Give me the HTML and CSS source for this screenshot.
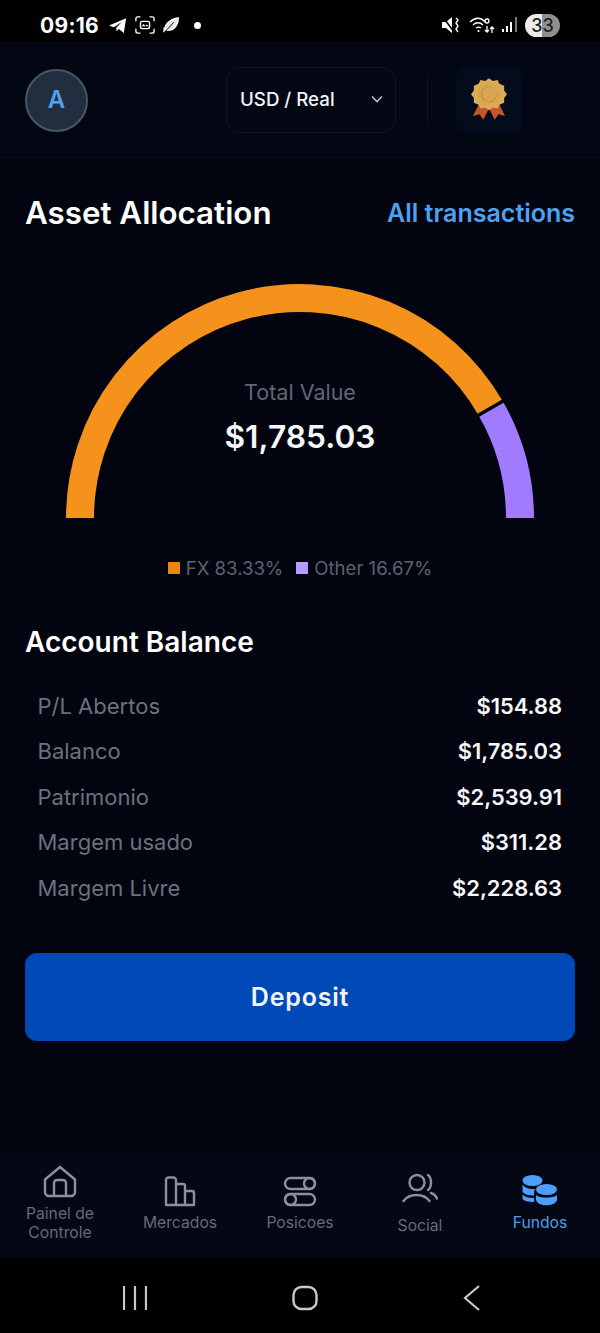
FILE: index.html
```html
<!DOCTYPE html>
<html lang="en">
<head>
<meta charset="utf-8">
<title>Asset Allocation</title>
<link rel="stylesheet" href="styles.css">
</head>
<body>
<div class="phone">
  <div class="status">
    <span class="time">09:16</span>
    <svg class="st-ic" width="20" height="18" viewBox="0 0 22 20"><path d="M1 10.500 20 2.500 17.500 19 12 14.500 9.500 17 9 13 15.500 6.500 6.500 12.500Z" fill="#fff"/></svg>
    <svg class="st-ic" width="20" height="20" viewBox="0 0 22 20" fill="none" stroke="#fff" stroke-width="1.500"><path d="M1 6V3a2 2 0 0 1 2-2h3M16 1h3a2 2 0 0 1 2 2v3M21 14v3a2 2 0 0 1-2 2h-3M6 19H3a2 2 0 0 1-2-2v-3"/><rect x="6" y="6" width="10" height="8" rx="2"/><path d="M7 11.500l2.500-2.500 2 2 1.500-1.500 2 2Z" fill="#fff" stroke="none"/></svg>
    <svg class="st-ic" width="18" height="18" viewBox="0 0 20 20" fill="none" stroke="#fff" stroke-width="1.500"><path d="M2 18C3 9 9 3 18 2c0 8-4 14-12 14-2 0-3.500-1-4-3" fill="#fff" fill-opacity=".9"/><path d="M4 17 13 7" stroke="#000" stroke-width="1"/></svg>
    <span class="dot"></span>
    <span class="st-spacer"></span>
    <svg class="st-ic" width="18" height="18" viewBox="0 0 18 18"><path d="M0 6h4l6-5v16l-6-5H0Z" fill="#fff"/><path d="M1 1l11 15" stroke="#000" stroke-width="1.500"/><path d="M14 2l2 2-2 3 2 3-2 3 2 3" stroke="#fff" fill="none" stroke-width="1.400"/></svg>
    <svg class="st-ic wifi" width="26" height="18" viewBox="0 0 26 18" fill="none" stroke="#fff" stroke-width="1.300"><path d="M1 6c5-5 11-5 15 0M4 9c3-3 7-3 10 0M7 12c2-1.500 3-1.500 5 0"/><circle cx="9.500" cy="15" r="1.100" fill="#fff" stroke="none"/><circle cx="18" cy="5" r="2"/><path d="M18 10v6M16 14l2 2 2-2M23 17v-6M21 13l2-2 2 2"/></svg>
    <svg class="st-ic" width="16" height="18" viewBox="0 0 16 18" fill="#fff"><rect x="0" y="13" width="2" height="3"/><rect x="4" y="10" width="2" height="6"/><rect x="8" y="6" width="2" height="10"/><rect x="13" y="1" width="2" height="15" fill="#777"/></svg>
    <span class="battery">33</span>
  </div>

  <header class="top">
    <div class="avatar">A</div>
    <div class="top-right">
      <div class="select">
        <span>USD / Real</span>
        <svg width="12" height="8" viewBox="0 0 12 8" fill="none" stroke="#b8bec9" stroke-width="1.600"><path d="M1 1.500 6 6.500 11 1.500"/></svg>
      </div>
      <span class="vsep"></span>
      <div class="medal">
        <svg width="36" height="44" viewBox="0 0 38 46">
          <path d="M9 27 2 41l7-2 4 6 7-14Z" fill="#c4552a"/>
          <path d="M29 27l7 14-7-2-4 6-7-14Z" fill="#c4552a"/>
          <path d="M19 1l4 3 5-1 2 4 5 2 0 5 3 4-3 4 0 5-5 2-2 4-5-1-4 3-4-3-5 1-2-4-5-2 0-5-3-4 3-4 0-5 5-2 2-4 5 1Z" fill="#dcab55"/>
          <circle cx="19" cy="18" r="12" fill="#d8a650"/>
          <path d="M27 18a8 8 0 1 1-5-7.500" fill="none" stroke="#c4953f" stroke-width="1.300"/>
        </svg>
      </div>
    </div>
  </header>

  <main class="main">
    <div class="heading">
      <h1>Asset Allocation</h1>
      <a class="all">All transactions</a>
    </div>

    <div class="gauge">
      <svg class="gauge-svg" width="468" height="234" viewBox="0 0 468 234" fill="none" stroke-width="28">
        <path d="M14 234A220 220 0 0 1 424.500 124" stroke="#f5921c"/>
        <path d="M424.500 124A220 220 0 0 1 454 234" stroke="#a07bff"/>
        <path d="M411 132 438 116.500" stroke="#02050f" stroke-width="3.500"/>
      </svg>
      <div class="gauge-text">
        <div class="gauge-label">Total Value</div>
        <div class="gauge-value">$1,785.03</div>
      </div>
    </div>

    <div class="legend">
      <span class="swatch swatch-fx"></span><span class="legend-t">FX 83.33%</span>
      <span class="swatch swatch-other"></span><span class="legend-t">Other 16.67%</span>
    </div>

    <h2>Account Balance</h2>
    <dl class="rows">
      <div class="row"><dt>P/L Abertos</dt><dd>$154.88</dd></div>
      <div class="row"><dt>Balanco</dt><dd>$1,785.03</dd></div>
      <div class="row"><dt>Patrimonio</dt><dd>$2,539.91</dd></div>
      <div class="row"><dt>Margem usado</dt><dd>$311.28</dd></div>
      <div class="row"><dt>Margem Livre</dt><dd>$2,228.63</dd></div>
    </dl>

    <button class="deposit">Deposit</button>
  </main>

  <nav class="nav">
    <div class="tab">
      <svg width="34" height="33" viewBox="0 0 34 33" fill="none" stroke="#8b909b" stroke-width="2.400" stroke-linejoin="round"><path d="M2 14.500 17 2l15 12.500V27a4 4 0 0 1-4 4H6a4 4 0 0 1-4-4Z"/><path d="M11 31V18a3 3 0 0 1 3-3h6a3 3 0 0 1 3 3v13"/></svg>
      <span class="tab-l two">Painel de<br>Controle</span>
    </div>
    <div class="tab">
      <svg width="32" height="31" viewBox="0 0 32 31" fill="none" stroke="#8b909b" stroke-width="2.400" stroke-linejoin="round"><path d="M2 29V4a2.500 2.500 0 0 1 2.500-2.500h5A2.500 2.500 0 0 1 12 4v25H2Z"/><path d="M12 8h7a2 2 0 0 1 2 2v19h-9"/><path d="M21 15h7a2 2 0 0 1 2 2v12h-9"/></svg>
      <span class="tab-l">Mercados</span>
    </div>
    <div class="tab">
      <svg width="34" height="31" viewBox="0 0 34 31" fill="none" stroke="#8b909b" stroke-width="2.400"><rect x="2" y="2" width="30" height="11" rx="5.500"/><circle cx="26.500" cy="7.500" r="5.500"/><rect x="2" y="18" width="30" height="11" rx="5.500"/><circle cx="7.500" cy="23.500" r="5.500"/></svg>
      <span class="tab-l">Posicoes</span>
    </div>
    <div class="tab">
      <svg width="36" height="32" viewBox="0 0 36 32" fill="none" stroke="#8b909b" stroke-width="2.400" stroke-linecap="round"><circle cx="15" cy="9.500" r="7.500"/><path d="M26 2c4 3 4 12 0 15"/><path d="M1.500 28c6-8 20-8 26 0"/><path d="M29 20c3 1 5 3 6 5.500"/></svg>
      <span class="tab-l social">Social</span>
    </div>
    <div class="tab active">
      <svg width="36" height="32" viewBox="0 0 36 32" fill="#4d9fff"><ellipse cx="10.500" cy="5.500" rx="10" ry="5.500"/><path d="M.500 9.500c2.500 3.500 7 4.500 10 4.500 1.500 0 2.500 0 3.500-.300-1.500 1-2 2-2 3.300v3.500c-5 0-10-1-11.500-4Z"/><path d="M.500 19.500c2 2.500 6 3.500 11.500 3.500v4c-5 0-11.500-1-11.500-4Z"/><ellipse cx="24.500" cy="14.500" rx="10.500" ry="5.500"/><path d="M14 20c3 3.500 18 3.500 21 0v5c-2 7-19 7-21 0Z"/></svg>
      <span class="tab-l">Fundos</span>
    </div>
  </nav>

  <div class="sysbar">
    <svg width="24" height="24" viewBox="0 0 24 24" stroke="#c9c9c9" stroke-width="2.200"><path d="M1 0v24M12 0v24M23 0v24"/></svg>
    <svg width="26" height="26" viewBox="0 0 26 26" fill="none" stroke="#c9c9c9" stroke-width="2.400"><rect x="1.500" y="2" width="23" height="22" rx="8"/></svg>
    <svg width="18" height="26" viewBox="0 0 18 26" fill="none" stroke="#c9c9c9" stroke-width="2.200"><path d="M16 1 2 13l14 12"/></svg>
  </div>
</div>
</body>
</html>
```

FILE: styles.css
```css
* { box-sizing: border-box; }
html, body { margin: 0; padding: 0; background: #000; }
body { font-family: Inter, "Liberation Sans", sans-serif; }
.phone { width: 600px; height: 1333px; display: flex; flex-direction: column; overflow: hidden; background: #02050f; color: #fff; }

.status { height: 42px; flex: none; background: #000; display: flex; align-items: center; padding: 8px 40px 0; gap: 7px; }
.time { font-size: 21px; font-weight: 700; letter-spacing: 0.3px; margin-right: 2px; }
.st-ic { flex: none; display: block; }
.dot { width: 7px; height: 7px; border-radius: 50%; background: #fff; margin-left: 7px; }
.st-spacer { flex: 1; }
.wifi { margin-left: 2px; }
.battery { width: 35px; height: 23px; border-radius: 12px; background: linear-gradient(90deg, #ececec 0 50%, #8f8f8f 50%); color: #222; font-size: 18px; font-weight: 500; display: flex; align-items: center; justify-content: center; }

.top { height: 116px; flex: none; display: flex; align-items: center; justify-content: space-between; padding: 1px 78px 0 25px; border-bottom: 1px solid #0b101b; background: #020713; }
.avatar { width: 63px; height: 63px; border-radius: 50%; background: #212e3f; border: 2px solid #4b5565; color: #4da3f0; font-size: 24px; font-weight: 600; display: flex; align-items: center; justify-content: center; padding-bottom: 1px; }
.top-right { display: flex; align-items: center; }
.select { width: 170px; height: 66px; border: 1px solid #0e1420; border-radius: 14px; display: flex; align-items: center; justify-content: space-between; padding: 0 12px 2px 13px; font-size: 18.700px; font-weight: 500; color: #f2f4f8; }
.vsep { width: 1px; height: 48px; background: #0f1520; margin: 0 28px 0 31px; }
.medal { width: 66px; height: 68px; border-radius: 12px; background: #030c1c; display: flex; align-items: center; justify-content: center; padding-bottom: 2px; }

.main { flex: 1; display: flex; flex-direction: column; padding: 0 25px; }
.heading { display: flex; justify-content: space-between; align-items: center; margin-top: 36px; height: 38px; }
h1 { margin: 0; font-size: 31.300px; font-weight: 600; }
.all { font-size: 25px; font-weight: 600; color: #4da3f0; }

.gauge { position: relative; width: 468px; height: 234px; margin: 52px 0 0 41px; flex: none; }
.gauge-svg { display: block; }
.gauge-text { position: absolute; left: 0; right: 0; top: 96px; text-align: center; }
.gauge-label { font-size: 21.500px; color: #616774; line-height: 24px; }
.gauge-value { font-size: 31.700px; font-weight: 600; line-height: 36px; margin-top: 15px; color: #f6f7f9; }

.legend { display: flex; align-items: center; justify-content: center; margin-top: 38px; height: 24px; font-size: 18.600px; color: #5c626e; }
.swatch { width: 12px; height: 12px; margin-right: 6px; flex: none; }
.swatch-fx { background: #e8890c; }
.swatch-other { background: #b79cff; margin-left: 13px; }

h2 { margin: 44px 0 0; font-size: 28px; font-weight: 600; line-height: 36px; }
.rows { margin: 23px 0 0; padding: 0 13px 0 12.500px; }
.row { display: flex; justify-content: space-between; align-items: center; height: 45.500px; font-size: 22px; }
dt { color: #6b717d; }
dd { margin: 0; font-weight: 600; font-size: 21.900px; color: #f6f7f9; }
.deposit { margin-top: 42px; height: 88px; border: 0; border-radius: 12px; background: #0049b7; color: #f2f4f8; font-family: inherit; font-size: 25px; font-weight: 600; letter-spacing: 0.800px; }

.nav { height: 106px; flex: none; display: grid; grid-template-columns: repeat(5, 120px); background: #040814; padding-bottom: 3px; }
.tab { display: flex; flex-direction: column; align-items: center; justify-content: center; color: #646a76; }
.tab-l { font-size: 15.700px; line-height: 19px; text-align: center; margin-top: 6px; }
.tab-l.social { margin-top: 11px; }
.tab.active { color: #4d9fe8; }

.sysbar { height: 75px; flex: none; background: #000; display: flex; align-items: center; padding: 4px 119px 0 123px; justify-content: space-between; }
```
